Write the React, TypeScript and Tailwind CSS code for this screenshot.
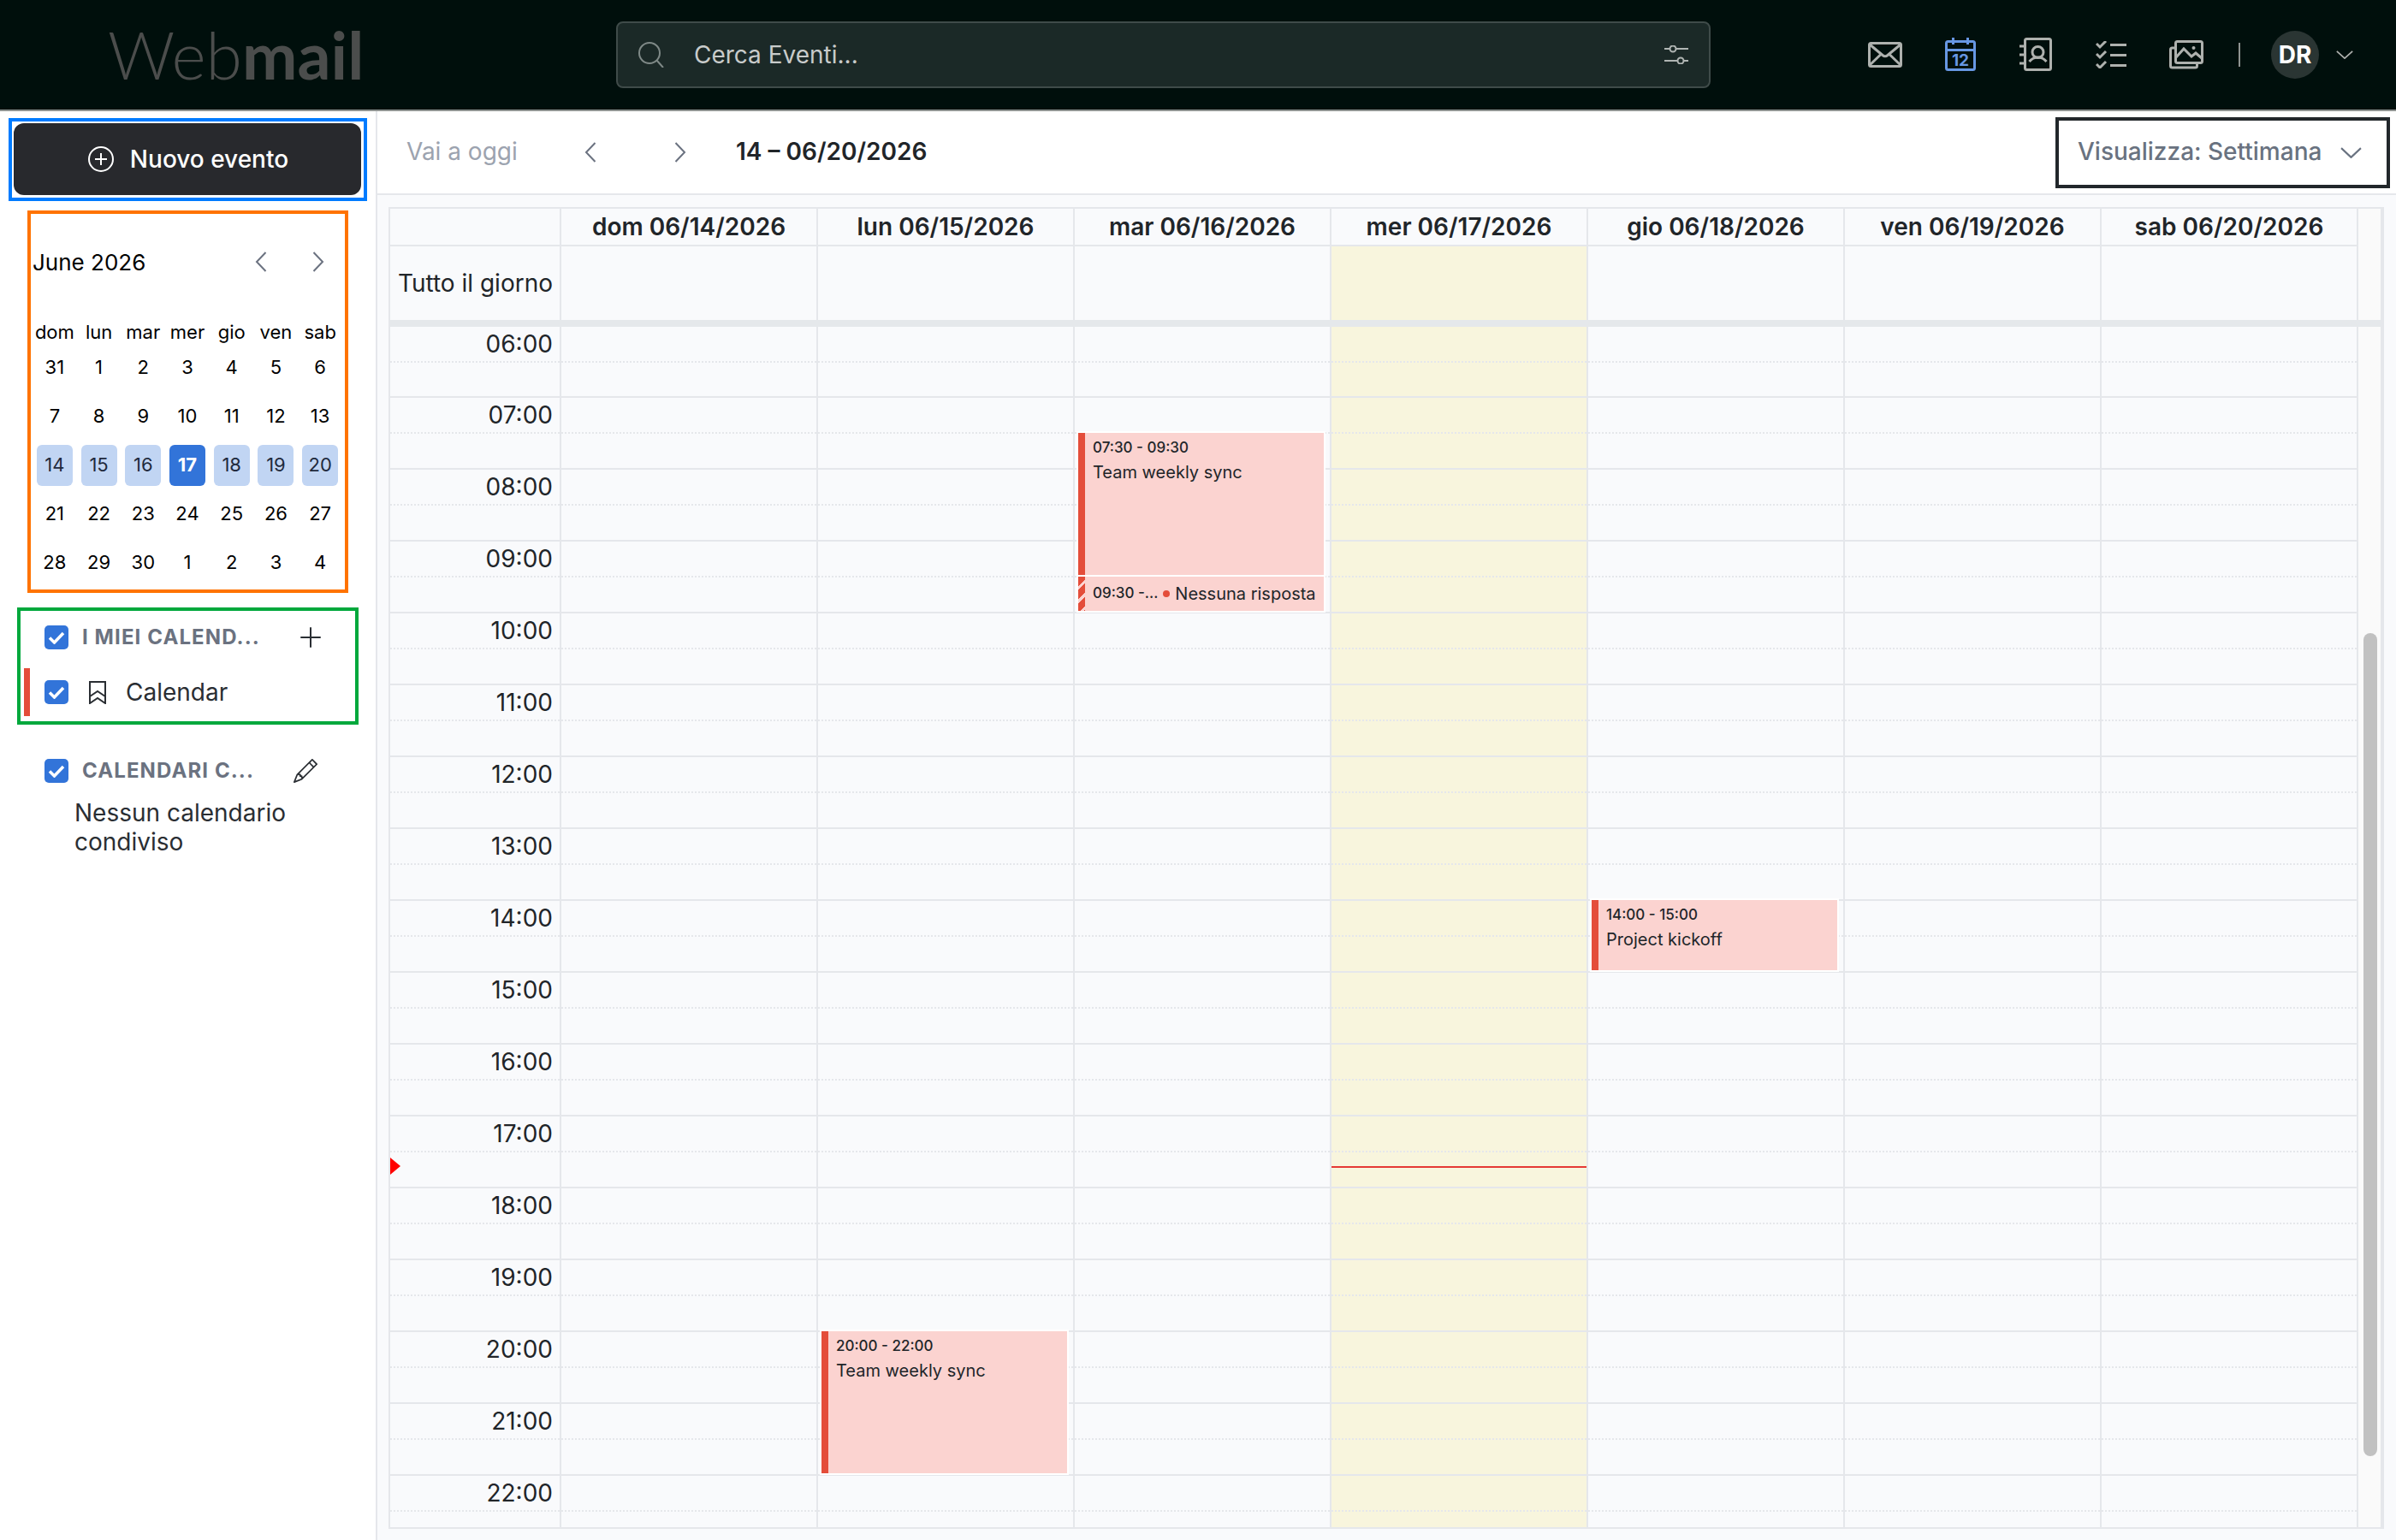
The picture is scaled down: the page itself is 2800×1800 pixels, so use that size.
import { BsPencil, BsPlusLg } from "react-icons/bs";

// ---------------------------------------------------------------------------
// Data
// ---------------------------------------------------------------------------

const WEEKDAYS = ["dom", "lun", "mar", "mer", "gio", "ven", "sab"];
const MONTH = [
  [31, 1, 2, 3, 4, 5, 6],
  [7, 8, 9, 10, 11, 12, 13],
  [14, 15, 16, 17, 18, 19, 20],
  [21, 22, 23, 24, 25, 26, 27],
  [28, 29, 30, 1, 2, 3, 4],
];
const DAY_HEADERS = [
  "dom 06/14/2026",
  "lun 06/15/2026",
  "mar 06/16/2026",
  "mer 06/17/2026",
  "gio 06/18/2026",
  "ven 06/19/2026",
  "sab 06/20/2026",
];
const HOURS = ["06", "07", "08", "09", "10", "11", "12", "13", "14", "15", "16", "17", "18", "19", "20", "21", "22"];
const TODAY = 3;

const EVENTS = [
  { col: 2, top: 124, height: 166, time: "07:30 - 09:30", title: "Team weekly sync" },
  { col: 4, top: 670, height: 82, time: "14:00 - 15:00", title: "Project kickoff" },
  { col: 1, top: 1174, height: 166, time: "20:00 - 22:00", title: "Team weekly sync" },
];

// ---------------------------------------------------------------------------
// Icons
// ---------------------------------------------------------------------------

function ChevronLeft() {
  return (
    <svg width="14" height="24" viewBox="0 0 14 24" fill="none" stroke="#6b7280" strokeWidth="2" className="shrink-0">
      <path d="M12.5 1 2 12l10.5 11" />
    </svg>
  );
}

function ChevronRight() {
  return (
    <svg width="14" height="24" viewBox="0 0 14 24" fill="none" stroke="#6b7280" strokeWidth="2" className="shrink-0">
      <path d="M1.5 1 12 12 1.5 23" />
    </svg>
  );
}

function ChevronDown({ width, height, color }: { width: number; height: number; color: string }) {
  return (
    <svg width={width} height={height} viewBox="0 0 24 12" preserveAspectRatio="none" fill="none" stroke={color} strokeWidth="2" className="shrink-0">
      <path d="M1 1l11 10L23 1" />
    </svg>
  );
}

function MailIcon() {
  return (
    <svg width="40" height="30" viewBox="0 0 40 30" fill="none" stroke="#aeb1ae" strokeWidth="3">
      <rect x="1.5" y="1.5" width="37" height="27" rx="2" />
      <path d="M2 3l15 12.5q3 2.5 6 0L38 3M2 27l13-12.5M38 27 25 14.5" />
    </svg>
  );
}

function CalendarIcon() {
  return (
    <svg width="36" height="39" viewBox="0 0 36 39" fill="none" stroke="#6797e3" strokeWidth="3">
      <rect x="1.5" y="4.5" width="33" height="33" rx="2" />
      <path d="M1.500 14.500h33M9.500 0v8M26.500 0v8" />
      <text x="18" y="33" textAnchor="middle" fill="#6797e3" stroke="none" fontSize="19" fontWeight="700" fontFamily="Inter, sans-serif">
        12
      </text>
    </svg>
  );
}

function ContactsIcon() {
  return (
    <svg width="38" height="39" viewBox="0 0 38 39" fill="none" stroke="#aeb1ae" strokeWidth="3">
      <rect x="6.500" y="1.500" width="30" height="36" rx="2" />
      <path d="M0 10h6M0 20h6M0 30h6" />
      <circle cx="21.500" cy="17" r="6.500" />
      <path d="M11.500 28q4-5 10-5t10 5" />
    </svg>
  );
}

function TasksIcon() {
  return (
    <svg width="36" height="32" viewBox="0 0 36 32" fill="none" stroke="#aeb1ae" strokeWidth="3">
      <path d="M1 4l4 4 7-7M1 16l4 4 7-7M1 28l4 4 7-7" transform="translate(0 -1)" />
      <path d="M17 4.500h19M17 16.500h19M17 28.500h19" />
    </svg>
  );
}

function PhotosIcon() {
  return (
    <svg width="40" height="34" viewBox="0 0 40 34" fill="none" stroke="#aeb1ae" strokeWidth="3">
      <rect x="7.500" y="1.500" width="31" height="25" rx="2" />
      <path d="M7 9H3.500a2 2 0 0 0-2 2v19a2 2 0 0 0 2 2h27a2 2 0 0 0 2-2v-3" />
      <path d="M8 20l9-10 9 9 5-4 7 6" />
      <circle cx="28.500" cy="9" r="2" fill="#aeb1ae" stroke="none" />
    </svg>
  );
}

function SearchIcon() {
  return (
    <svg width="30" height="30" viewBox="0 0 30 30" fill="none" stroke="#7f8987" strokeWidth="2" className="shrink-0">
      <circle cx="13" cy="13" r="12" />
      <path d="M21.500 21.500 29 30" />
    </svg>
  );
}

function FilterIcon() {
  return (
    <svg width="28" height="22" viewBox="0 0 28 22" fill="none" stroke="#b0b5b3" strokeWidth="2" className="shrink-0">
      <path d="M0 4h6.500M13.500 4H28M0 18h15.500M22.500 18H28" />
      <circle cx="10" cy="4" r="3.500" />
      <circle cx="19" cy="18" r="3.500" />
    </svg>
  );
}

function PlusCircleIcon() {
  return (
    <svg width="30" height="30" viewBox="0 0 30 30" fill="none" stroke="#ffffff" strokeWidth="2" className="shrink-0">
      <circle cx="15" cy="15" r="14" />
      <path d="M15 8v14M8 15h14" />
    </svg>
  );
}

function BookmarkIcon() {
  return (
    <svg width="20" height="27" viewBox="0 0 20 27" fill="none" stroke="#2a2e33" strokeWidth="2" className="shrink-0">
      <path d="M1 1h18v25l-9-6-9 6zM1 18l9-6 9 6" />
    </svg>
  );
}

function CheckBox() {
  return (
    <span className="w-[28px] h-[28px] shrink-0 rounded-[5px] bg-[#3274d9] flex items-center justify-center">
      <svg width="20" height="16" viewBox="0 0 20 16" fill="none" stroke="#ffffff" strokeWidth="3.500">
        <path d="M2 8.500 7.500 14 18 3" />
      </svg>
    </span>
  );
}

// ---------------------------------------------------------------------------
// Sidebar
// ---------------------------------------------------------------------------

function MiniCalendar() {
  return (
    <div className="ml-[32px] mt-[11px] w-[375px] h-[447px] border-4 border-[#ff7300] text-black">
      <div className="mt-[30px] h-[52px] flex items-center pl-[2px] pr-[24px]">
        <span className="text-[26px]">June 2026</span>
        <span className="ml-auto mr-[53px]">
          <ChevronLeft />
        </span>
        <ChevronRight />
      </div>
      <div className="mt-[44px] ml-[2px] w-[362px] grid grid-cols-7 h-[25px] text-[22px] leading-[25px] text-center">
        {WEEKDAYS.map((d) => (
          <span key={d}>{d}</span>
        ))}
      </div>
      <div className="ml-[2px] w-[362px] grid grid-cols-7 grid-rows-[repeat(5,57px)] text-[22px]">
        {MONTH.map((week, row) =>
          week.map((day, i) => (
            <div key={`${row}-${i}`} className="flex items-center justify-center">
              {row === 2 ? (
                <span
                  className={
                    i === TODAY
                      ? "w-[42px] h-[48px] rounded-[6px] flex items-center justify-center bg-[#3274d9] text-white font-bold"
                      : "w-[42px] h-[48px] rounded-[6px] flex items-center justify-center bg-[#c1d5f3] text-[#1f2a3d]"
                  }
                >
                  {day}
                </span>
              ) : (
                day
              )}
            </div>
          ))
        )}
      </div>
    </div>
  );
}

function Sidebar() {
  return (
    <aside className="w-[441px] shrink-0 border-r-2 border-[#e5e7eb] bg-white">
      <div className="ml-[10px] mt-[8px] w-[419px] h-[97px] border-4 border-[#007bff] pl-[2px] pr-[3px] pt-[2px] pb-[3px]">
        <button className="w-full h-full rounded-[12px] bg-[#28292d] flex items-center justify-center gap-[19px] pl-[2px] text-white text-[28px] font-medium">
          <PlusCircleIcon />
          Nuovo evento
        </button>
      </div>

      <MiniCalendar />

      <div className="ml-[20px] mt-[17px] w-[399px] h-[137px] border-4 border-[#00a83c]">
        <div className="h-[62px] flex items-center pl-[28px] pr-[36px]">
          <CheckBox />
          <span className="ml-[16px] text-[24px] font-bold tracking-[1.1px] text-[#6b7280] whitespace-nowrap">I MIEI CALEND...</span>
          <BsPlusLg className="ml-auto text-[#2a2e33] w-[32px] h-[32px]" />
        </div>
        <div className="mt-[5px] ml-[4px] h-[56px] flex items-center text-[#2a2e33]">
          <span className="w-[7px] h-full bg-[#e44d3a]" />
          <span className="ml-[17px]">
            <CheckBox />
          </span>
          <span className="ml-[24px]">
            <BookmarkIcon />
          </span>
          <span className="ml-[23px] text-[28px]">Calendar</span>
        </div>
      </div>

      <div className="mt-[40px] pl-[52px] pr-[68px] h-[28px] flex items-center">
        <CheckBox />
        <span className="ml-[16px] text-[24px] font-bold tracking-[1.1px] text-[#6b7280] whitespace-nowrap">CALENDARI C...</span>
        <BsPencil className="ml-auto text-[#2a2e33] w-[28px] h-[28px]" />
      </div>
      <p className="mt-[18px] ml-[87px] w-[300px] text-[28px] leading-[34px] text-[#2a2e33]">Nessun calendario condiviso</p>
    </aside>
  );
}

// ---------------------------------------------------------------------------
// Week grid
// ---------------------------------------------------------------------------

function WeekGrid() {
  return (
    <div className="flex-1 min-h-0 mt-[14px] ml-[13px] mr-[14px] mb-[13px] border-l-2 border-t-2 border-b-2 border-r-4 border-[#e5e7eb] flex flex-col">
      {/* Day titles */}
      <div className="flex h-[44px] shrink-0">
        <div className="w-[200px] shrink-0 border-r-2 border-b-2 border-[#e5e7eb]" />
        {DAY_HEADERS.map((d) => (
          <div key={d} className="w-[300px] shrink-0 border-r-2 border-b-2 border-[#e5e7eb] flex items-center justify-center text-[28px] font-semibold text-[#212529] whitespace-nowrap">
            {d}
          </div>
        ))}
        <div className="flex-1 bg-[#fafafa]" />
      </div>

      {/* All day */}
      <div className="flex h-[86px] shrink-0">
        <div className="w-[200px] shrink-0 border-r-2 border-[#e5e7eb] flex items-center justify-end pr-[8px] text-[28px] text-[#212529] whitespace-nowrap">Tutto il giorno</div>
        {DAY_HEADERS.map((d, i) => (
          <div key={d} className={i === TODAY ? "w-[300px] shrink-0 border-r-2 border-[#e5e7eb] bg-[#f8f5dd]" : "w-[300px] shrink-0 border-r-2 border-[#e5e7eb]"} />
        ))}
        <div className="flex-1 bg-[#fafafa]" />
      </div>
      <div className="h-[8px] shrink-0 bg-[#e5e8eb]" />

      {/* Hours */}
      <div className="flex-1 min-h-0 flex overflow-hidden">
        <div className="relative w-[2300px] shrink-0">
          {HOURS.map((h, r) => (
            <div key={h} className={r === 0 ? "flex h-[83px]" : r === HOURS.length - 1 ? "flex h-[60px] overflow-hidden" : "flex h-[84px]"}>
              <div className={r === HOURS.length - 1 ? "w-[200px] shrink-0 border-r-2 border-[#e5e7eb]" : "w-[200px] shrink-0 border-r-2 border-b-2 border-[#e5e7eb]"}>
                <div className="h-[42px] border-b-2 border-dotted border-[#e5e7eb] text-right pr-[8px] text-[28px] leading-[40px] text-[#212529]">{h}:00</div>
              </div>
              {WEEKDAYS.map((d, i) => (
                <div
                  key={d}
                  className={
                    (i === TODAY ? "bg-[#f8f5dd] " : "") +
                    (r === HOURS.length - 1 ? "w-[300px] shrink-0 border-r-2 border-[#e5e7eb]" : "w-[300px] shrink-0 border-r-2 border-b-2 border-[#e5e7eb]")
                  }
                >
                  <div className="h-[42px] border-b-2 border-dotted border-[#e5e7eb]" />
                </div>
              ))}
            </div>
          ))}

          {/* Events sit on top of the hour rows */}
          {EVENTS.map((ev) => (
            <div
              key={ev.col + ev.time}
              className="absolute w-[287px] flex bg-[#fbd3d0] ring-2 ring-white text-[#212529]"
              style={{ left: 200 + ev.col * 300 + 4, top: ev.top, height: ev.height }}
            >
              <span className="w-[8px] shrink-0 bg-[#e44d3a]" />
              <div className="pl-[9px] pt-[5px]">
                <div className="text-[17px] leading-[24px] font-medium">{ev.time}</div>
                <div className="mt-[5px] text-[20px] leading-[24px]">{ev.title}</div>
              </div>
            </div>
          ))}
          <div className="absolute left-[804px] top-[292px] w-[287px] h-[40px] flex items-center bg-[#fbd3d0] ring-2 ring-white text-[#212529] whitespace-nowrap">
            <span className="w-[8px] h-full shrink-0 bg-[repeating-linear-gradient(135deg,#e44d3a_0px,#e44d3a_8px,#fbd3d0_8px,#fbd3d0_11px)]" />
            <span className="ml-[9px] text-[17px] font-medium">09:30 -...</span>
            <span className="ml-[6px] w-[8px] h-[8px] shrink-0 rounded-full bg-[#e44d3a]" />
            <span className="ml-[6px] text-[20px]">Nessuna risposta</span>
          </div>

          {/* Current time */}
          <svg width="12" height="20" viewBox="0 0 12 20" className="absolute left-0 top-[971px]">
            <path d="M0 0l12 10L0 20z" fill="#ff0000" />
          </svg>
          <div className="absolute left-[1100px] top-[981px] w-[298px] h-[2px] bg-[#e53935]" />
        </div>
        <div className="flex-1 bg-[#fafafa] pl-[6px] pt-[358px]">
          <div className="w-[16px] h-[962px] rounded-full bg-[#c1c1c1]" />
        </div>
      </div>
    </div>
  );
}

// ---------------------------------------------------------------------------
// Page
// ---------------------------------------------------------------------------

export default function App() {
  return (
    <div className="w-[2800px] h-[1800px] flex flex-col overflow-hidden bg-white [font-family:Inter,sans-serif]">
      <header className="h-[130px] shrink-0 flex items-center bg-[#000f0c] border-b-2 border-[#8f9391] pb-[1px]">
        <div className="w-[720px] shrink-0 pl-[126px] text-[77px] leading-none text-[#4b4d4c] [font-family:Lato,sans-serif] whitespace-nowrap">
          <span className="font-light">Web</span>
          <span className="font-bold">mail</span>
        </div>
        <div className="w-[1279px] h-[78px] shrink-0 rounded-[8px] border-2 border-[#3f4b49] bg-[#1b2927] flex items-center pl-[24px] pr-[24px]">
          <SearchIcon />
          <span className="ml-[35px] text-[28px] text-[#c8cbca]">Cerca Eventi...</span>
          <span className="ml-auto">
            <FilterIcon />
          </span>
        </div>
        <nav className="ml-auto flex items-center pr-[50px]">
          <div className="w-[88px] flex justify-center"><MailIcon /></div>
          <div className="w-[88px] flex justify-center"><CalendarIcon /></div>
          <div className="w-[88px] flex justify-center"><ContactsIcon /></div>
          <div className="w-[88px] flex justify-center"><TasksIcon /></div>
          <div className="w-[88px] flex justify-center"><PhotosIcon /></div>
          <span className="ml-[17px] w-[2px] h-[28px] bg-[#8f9391]" />
          <span className="ml-[36px] w-[56px] h-[56px] rounded-full bg-[#2a3533] flex items-center justify-center text-white text-[28px] font-bold">DR</span>
          <span className="ml-[20px]">
            <ChevronDown width={20} height={10} color="#aeb1ae" />
          </span>
        </nav>
      </header>

      <div className="flex-1 min-h-0 flex">
        <Sidebar />
        <main className="flex-1 min-w-0 flex flex-col bg-[#f9fafc]">
          <div className="h-[98px] shrink-0 bg-white border-b-2 border-[#e5e7eb] flex items-center pl-[34px]">
            <span className="w-[208px] shrink-0 pb-[2px] text-[28px] text-[#9ca3af]">Vai a oggi</span>
            <ChevronLeft />
            <span className="ml-[91px]">
              <ChevronRight />
            </span>
            <span className="ml-[58px] pb-[2px] text-[28px] font-semibold text-[#212529]">14 – 06/20/2026</span>
            <div className="ml-auto mr-[7px] w-[391px] h-[83px] border-4 border-[#22272b] flex items-center pl-[22px] pr-[29px]">
              <span className="pb-[2px] text-[28px] font-medium text-[#697280] whitespace-nowrap">Visualizza: Settimana</span>
              <span className="ml-auto">
                <ChevronDown width={25} height={13} color="#697280" />
              </span>
            </div>
          </div>
          <WeekGrid />
        </main>
      </div>
    </div>
  );
}
